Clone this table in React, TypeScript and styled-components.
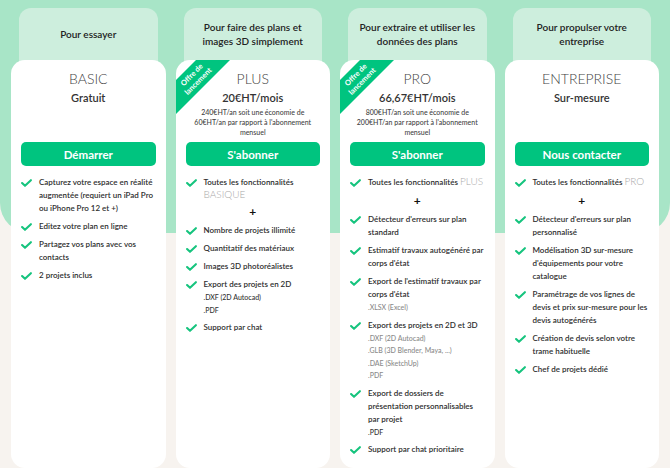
import React from "react"
import styled, { createGlobalStyle } from "styled-components"

type Sub = { text: string; muted?: boolean }
type Feature = { text: string; tag?: string; subs?: Sub[]; plusAfter?: boolean; tagBlock?: boolean }
type Plan = {
    pitch: string
    name: string
    price: string
    note?: string
    cta: string
    ribbon?: boolean
    features: Feature[]
}

const plans: Plan[] = [
    {
        pitch: "Pour essayer",
        name: "BASIC",
        price: "Gratuit",
        cta: "Démarrer",
        features: [
            { text: "Capturez votre espace en réalité augmentée (requiert un iPad Pro ou iPhone Pro 12 et +)" },
            { text: "Editez votre plan en ligne" },
            { text: "Partagez vos plans avec vos contacts" },
            { text: "2 projets inclus" },
        ],
    },
    {
        pitch: "Pour faire des plans et images 3D simplement",
        name: "PLUS",
        price: "20€HT/mois",
        note: "240€HT/an soit une économie de 60€HT/an par rapport à l'abonnement mensuel",
        cta: "S'abonner",
        ribbon: true,
        features: [
            { text: "Toutes les fonctionnalités", tag: "BASIQUE", tagBlock: true, plusAfter: true },
            { text: "Nombre de projets illimité" },
            { text: "Quantitatif des matériaux" },
            { text: "Images 3D photoréalistes" },
            { text: "Export des projets en 2D", subs: [{ text: ".DXF (2D Autocad)" }, { text: ".PDF" }] },
            { text: "Support par chat" },
        ],
    },
    {
        pitch: "Pour extraire et utiliser les données des plans",
        name: "PRO",
        price: "66,67€HT/mois",
        note: "800€HT/an soit une économie de 200€HT/an par rapport à l'abonnement mensuel",
        cta: "S'abonner",
        ribbon: true,
        features: [
            { text: "Toutes les fonctionnalités", tag: "PLUS", plusAfter: true },
            { text: "Détecteur d'erreurs sur plan standard" },
            { text: "Estimatif travaux autogénéré par corps d'état" },
            { text: "Export de l'estimatif travaux par corps d'état", subs: [{ text: ".XLSX (Excel)", muted: true }] },
            {
                text: "Export des projets en 2D et 3D",
                subs: [
                    { text: ".DXF (2D Autocad)", muted: true },
                    { text: ".GLB (3D Blender, Maya, ...)", muted: true },
                    { text: ".DAE (SketchUp)", muted: true },
                    { text: ".PDF", muted: true },
                ],
            },
            { text: "Export de dossiers de\nprésentation personnalisables par projet", subs: [{ text: ".PDF" }] },
            { text: "Support par chat prioritaire" },
        ],
    },
    {
        pitch: "Pour propulser votre entreprise",
        name: "ENTREPRISE",
        price: "Sur-mesure",
        cta: "Nous contacter",
        features: [
            { text: "Toutes les fonctionnalités", tag: "PRO", plusAfter: true },
            { text: "Détecteur d'erreurs sur plan personnalisé" },
            { text: "Modélisation 3D sur-mesure d'équipements pour votre catalogue" },
            { text: "Paramétrage de vos lignes de devis et prix sur-mesure pour les devis autogénérés" },
            { text: "Création de devis selon votre trame habituelle" },
            { text: "Chef de projets dédié" },
        ],
    },
]

const Check = () => (
    <CheckIcon viewBox="0 0 11 8" width="11" height="8">
        <path d="M1.1 4 L4 6.8 L9.9 1.2" fill="none" stroke="#16c47e" strokeWidth="2.1" strokeLinecap="round" strokeLinejoin="round" />
    </CheckIcon>
)

export default function App() {
    return (
        <>
            <GlobalStyle />
            <Page>
                {plans.map((plan) => (
                    <Column key={plan.name}>
                        <Pitch>{plan.pitch}</Pitch>
                        <Card>
                            {plan.ribbon && (
                                <Ribbon>
                                    Offre de
                                    <br />
                                    lancement
                                </Ribbon>
                            )}
                            <PlanName>{plan.name}</PlanName>
                            <PriceArea>
                                <Price>{plan.price}</Price>
                                {plan.note && <Note>{plan.note}</Note>}
                            </PriceArea>
                            <Cta>{plan.cta}</Cta>
                            <Features>
                                {plan.features.map((f) => (
                                    <React.Fragment key={f.text}>
                                        <Item>
                                            <Check />
                                            <ItemBody>
                                                <ItemText>
                                                    {f.text}
                                                    {f.tag && <Tag $block={f.tagBlock}>{f.tag}</Tag>}
                                                </ItemText>
                                                {f.subs?.map((s, i) => (
                                                    <SubLine key={i} $muted={s.muted}>
                                                        {s.text}
                                                    </SubLine>
                                                ))}
                                            </ItemBody>
                                        </Item>
                                        {f.plusAfter && <Plus>+</Plus>}
                                    </React.Fragment>
                                ))}
                            </Features>
                        </Card>
                    </Column>
                ))}
            </Page>
        </>
    )
}

// Styled components
const GlobalStyle = createGlobalStyle`
    * { box-sizing: border-box; }
    body {
        margin: 0;
        background: #f7f3ef;
        font-family: "Lato", "Open Sans", sans-serif;
        color: #2e2e2e;
    }
`

const Page = styled.main`
    position: relative;
    min-height: 468px;
    padding: 8px 11px 3px;
    display: grid;
    grid-template-columns: repeat(4, 1fr);
    gap: 10px;

    &::before {
        content: '';
        position: absolute;
        top: 0;
        left: 0;
        right: 0;
        height: 233px;
        background: #a8e5c7;
        border-radius: 0 0 30px 30px;
    }
`

const Column = styled.section`
    position: relative;
    display: flex;
    flex-direction: column;
`

const Pitch = styled.div`
    height: 66px;
    margin: 0 8px -14px;
    padding: 0 10px 14px;
    border-radius: 12px 12px 0 0;
    background: #cdeedd;
    display: flex;
    align-items: center;
    justify-content: center;
    text-align: center;
    font-size: 10px;
    line-height: 14px;
    font-weight: 600;
    color: #222;
`

const Card = styled.div`
    position: relative;
    flex: 1;
    background: #fff;
    border-radius: 14px;
    overflow: hidden;
    padding: 10px 0 12px;
    display: flex;
    flex-direction: column;
`

const Ribbon = styled.div`
    position: absolute;
    left: -36px;
    top: 6px;
    width: 110px;
    height: 24px;
    transform: rotate(-45deg);
    background: #00c47f;
    color: #fff;
    font-size: 7.5px;
    line-height: 9px;
    font-weight: 700;
    text-align: center;
    padding-top: 3px;
`

const PlanName = styled.h2`
    margin: 0;
    text-align: center;
    font-size: 14px;
    line-height: 18px;
    font-weight: 300;
    color: #444;
`

const PriceArea = styled.div`
    margin-top: 3px;
    height: 51px;
    padding: 0 12px;
    text-align: center;
`

const Price = styled.div`
    font-size: 11px;
    line-height: 14px;
    font-weight: 600;
    color: #333;
`

const Note = styled.div`
    margin-top: 2px;
    font-size: 7px;
    line-height: 10px;
    font-weight: 500;
    color: #444;
`

const Cta = styled.button`
    margin: 0 10px;
    height: 24px;
    border: none;
    border-radius: 5px;
    background: #00c47f;
    color: #fff;
    font-family: inherit;
    font-size: 11.5px;
    font-weight: 700;
    cursor: pointer;
`

const Features = styled.ul`
    list-style: none;
    margin: 10px 0 0;
    padding: 0 10px;
    display: flex;
    flex-direction: column;
    gap: 5px;
`

const Item = styled.li`
    display: flex;
    gap: 7px;
`

const CheckIcon = styled.svg`
    flex: none;
    margin-top: 3px;
`

const ItemBody = styled.div`
    flex: 1;
    min-width: 0;
`

const ItemText = styled.div`
    font-size: 8px;
    line-height: 13px;
    font-weight: 600;
    color: #2e2e2e;
    white-space: pre-line;
`

const Tag = styled.span<{ $block?: boolean }>`
    display: ${(p) => (p.$block ? "block" : "inline")};
    margin-left: ${(p) => (p.$block ? "0" : "2px")};
    font-size: 10px;
    line-height: 11px;
    font-weight: 300;
    color: #a9a9a9;
`

const SubLine = styled.div<{ $muted?: boolean }>`
    font-size: 7px;
    line-height: 12.5px;
    font-weight: 500;
    color: ${(p) => (p.$muted ? "#8a8a8a" : "#333")};
`

const Plus = styled.li`
    height: 14px;
    text-align: center;
    font-size: 12px;
    line-height: 14px;
    font-weight: 700;
    color: #111;
`
